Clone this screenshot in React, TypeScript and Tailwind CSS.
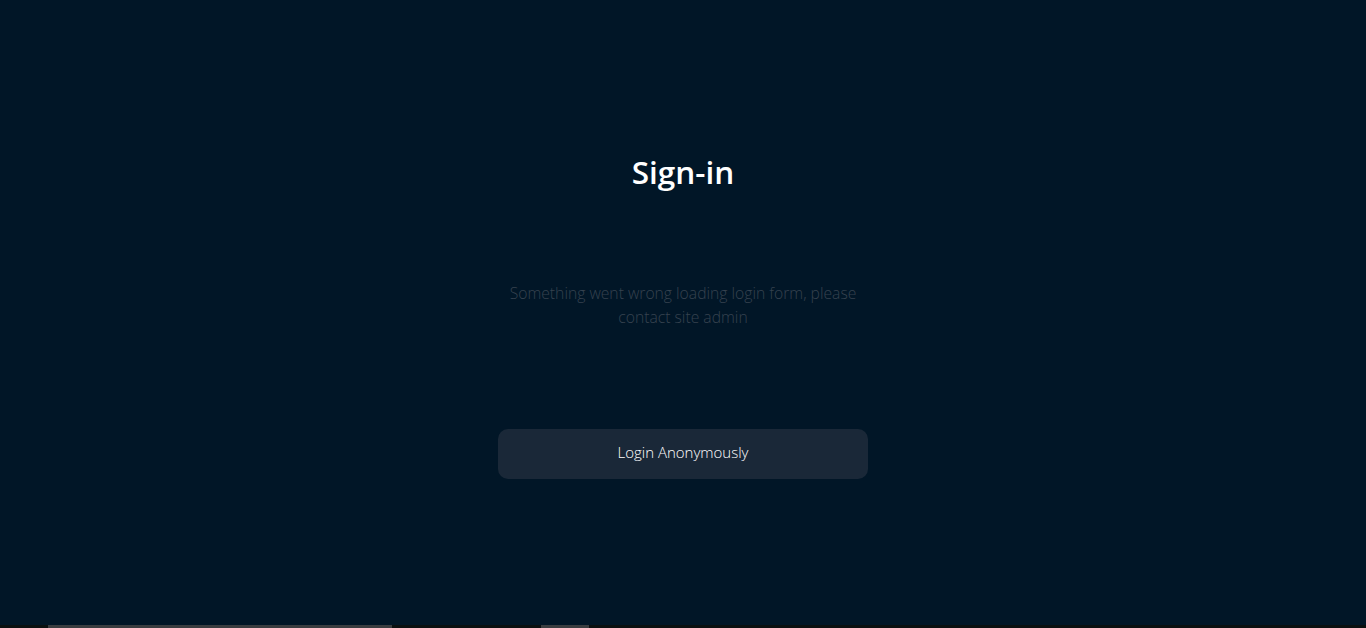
export default function App() {
    return <div className="w-screen h-screen bg-[#011627] flex flex-col overflow-hidden" style={{ fontFamily: '"Open Sans", "Noto Sans", sans-serif' }}>
        <div className="flex-1 flex flex-col items-center">
            <h1 className="mt-[151px] text-[31.5px] leading-[42px] font-semibold text-white">Sign-in</h1>
            <p className="mt-[88px] w-[370px] text-center text-[15.7px] leading-6 font-light text-[#36424f]">
                Something went wrong loading login form, please contact site admin
            </p>
            <button className="mt-[100px] w-[370px] h-[50px] pb-[3px] rounded-[10px] bg-[#1a2838] text-white text-[15px] font-light">
                Login Anonymously
            </button>
        </div>
        <div className="h-[3px] bg-[#0b1010] flex">
            <div className="ml-[48px] w-[344px] bg-[#3a3d40]"></div>
            <div className="ml-[149px] w-[48px] bg-[#3a3d40]"></div>
        </div>
    </div>
}
